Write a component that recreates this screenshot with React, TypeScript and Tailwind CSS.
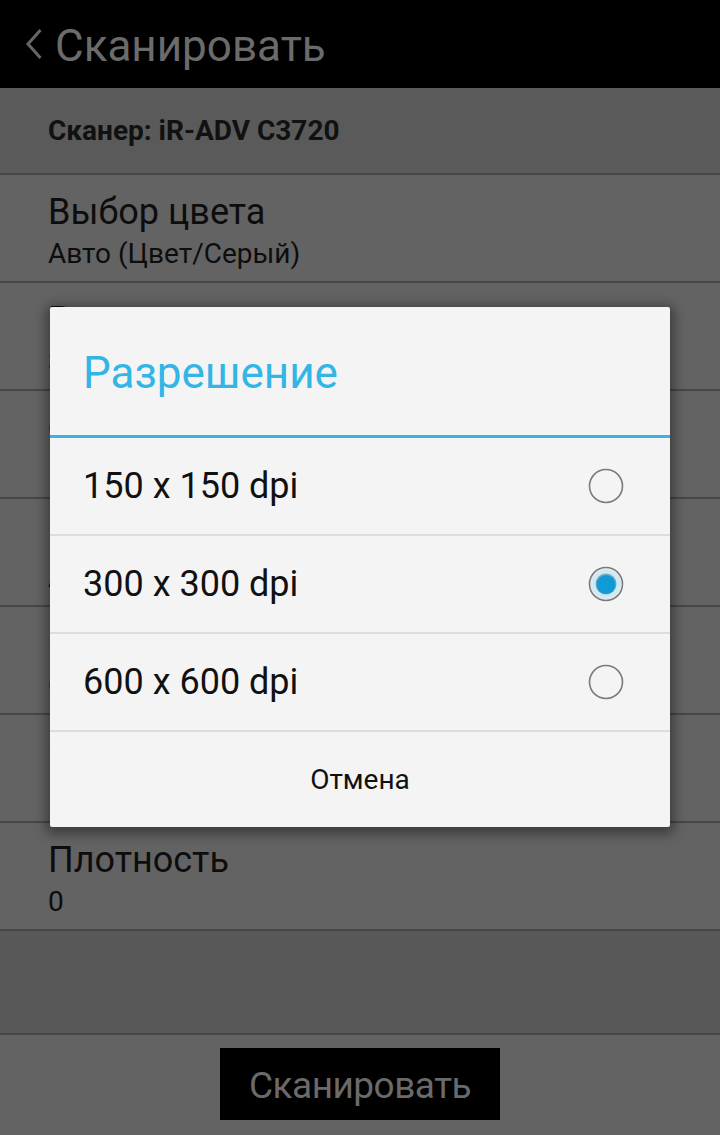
import React from 'react';

const rows = [
  { title: 'Выбор цвета', value: 'Авто (Цвет/Серый)' },
  { title: 'Разрешение', value: '300 x 300 dpi' },
  { title: 'Формат', value: 'PDF (Компактный)' },
  { title: 'Размер', value: 'A4' },
  { title: 'Сторона', value: 'Односторонний' },
  { title: 'Ориентация', value: 'Книжная' },
  { title: 'Плотность', value: '0' },
];

const options = ['150 x 150 dpi', '300 x 300 dpi', '600 x 600 dpi'];

const Radio: React.FC<{ checked: boolean }> = ({ checked }) => (
  <svg width="38" height="38" viewBox="0 0 38 38">
    {checked && <circle cx="19" cy="19" r="15" fill="#cfe9f5" />}
    <circle cx="19" cy="19" r="16.5" fill="none" stroke="#7a7a7a" strokeWidth="1.6" />
    {checked && (
      <>
        <circle cx="19" cy="19" r="10.5" fill="#7fa9bd" />
        <circle cx="19" cy="19.5" r="9.5" fill="#0e9bd6" />
      </>
    )}
  </svg>
);

export default function App() {
  return (
    <div className="relative w-[720px] h-[1135px] overflow-hidden bg-[#636363] font-['Roboto','Noto_Sans',sans-serif]">
      {/* action bar */}
      <div className="h-[88px] bg-black flex items-center pl-[25px]">
        <svg width="18" height="32" viewBox="0 0 18 32" className="mt-[-1px]">
          <path d="M15.5 2 L3 16 L15.5 30" fill="none" stroke="#666666" strokeWidth="3" />
        </svg>
        <span className="ml-[12px] text-[44px] text-[#6b6b6b] leading-[44px] mt-[3px]">Сканировать</span>
      </div>

      {/* scanner */}
      <div className="h-[87px] bg-[#5a5a5a] flex items-center pl-[48px] border-b-2 border-[#474747]">
        <span className="text-[28px] leading-[28px] font-bold text-[#111]">Сканер: iR-ADV C3720</span>
      </div>

      {rows.map((r) => (
        <div key={r.title} className="h-[108px] bg-[#636363] border-b-2 border-[#474747] pl-[48px] pt-[19px]">
          <div className="text-[36px] leading-[36px] text-[#0d0d0d]">{r.title}</div>
          <div className="text-[28px] leading-[28px] text-[#0d0d0d] mt-[10px]">{r.value}</div>
        </div>
      ))}

      <div className="h-[104px] bg-[#585858] border-b-2 border-[#474747]" />

      <div className="h-[100px] flex justify-center pt-[13px]">
        <div className="w-[280px] h-[72px] bg-black flex items-center justify-center">
          <span className="text-[37px] leading-[37px] text-[#6a6a6a] tracking-[-0.5px] mt-[3px]">Сканировать</span>
        </div>
      </div>

      {/* dialog */}
      <div className="absolute left-[50px] top-[307px] w-[620px] bg-[#f4f4f4] rounded-[2px] shadow-[0_3px_12px_4px_rgba(0,0,0,0.4)]">
        <div className="h-[128px] flex items-center pl-[33px]">
          <span className="text-[44px] leading-[44px] text-[#33b5e5] mt-[3px]">Разрешение</span>
        </div>
        <div className="h-[3px] bg-[#33b5e5]" />
        {options.map((o, i) => (
          <div key={o} className="h-[98px] flex items-center justify-between pl-[33px] pr-[45px] border-b-2 border-[#dddddd]">
            <span className="text-[36px] leading-[36px] text-[#111]">{o}</span>
            <Radio checked={i === 1} />
          </div>
        ))}
        <div className="h-[95px] flex items-center justify-center">
          <span className="text-[28px] leading-[28px] text-[#111]">Отмена</span>
        </div>
      </div>
    </div>
  );
}
